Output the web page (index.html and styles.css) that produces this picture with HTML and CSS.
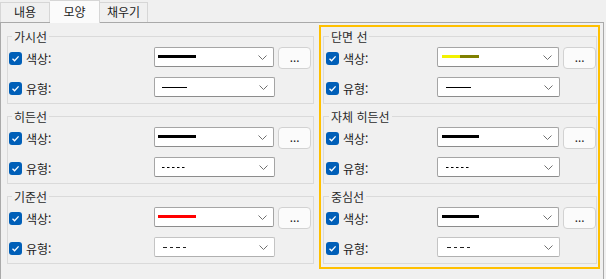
FILE: index.html
```html
<!DOCTYPE html>
<html lang="ko">
<head>
  <meta charset="UTF-8">
  <title>선 모양</title>
  <link rel="stylesheet" href="styles.css">
</head>
<body>
  <div class="tabs">
    <div class="tab first">내용</div>
    <div class="tab active">모양</div>
    <div class="tab">채우기</div>
  </div>

  <div class="panel">
    <div class="col-left">
      <fieldset class="group">
        <legend>가시선</legend>
        <div class="row">
          <label class="check"><span class="box"><svg width="13" height="13" viewBox="0 0 13 13"><polyline points="3.5,6.8 5.6,8.8 9.6,4.4" /></svg></span>색상:</label>
          <div class="combo"><svg class="swatch" width="40" height="6"><rect x="0" y="1" width="38" height="3" fill="#000" /></svg><svg class="chev" width="9" height="5"><polyline points="0.5,0.5 4.5,4.5 8.5,0.5" /></svg></div>
          <button class="more">...</button>
        </div>
        <div class="row">
          <label class="check"><span class="box"><svg width="13" height="13" viewBox="0 0 13 13"><polyline points="3.5,6.8 5.6,8.8 9.6,4.4" /></svg></span>유형:</label>
          <div class="combo"><svg class="swatch" width="40" height="6"><line x1="4" y1="3.5" x2="29" y2="3.5" stroke="#000" /></svg><svg class="chev" width="9" height="5"><polyline points="0.5,0.5 4.5,4.5 8.5,0.5" /></svg></div>
        </div>
      </fieldset>

      <fieldset class="group">
        <legend>히든선</legend>
        <div class="row">
          <label class="check"><span class="box"><svg width="13" height="13" viewBox="0 0 13 13"><polyline points="3.5,6.8 5.6,8.8 9.6,4.4" /></svg></span>색상:</label>
          <div class="combo"><svg class="swatch" width="40" height="6"><rect x="0" y="1" width="38" height="3" fill="#000" /></svg><svg class="chev" width="9" height="5"><polyline points="0.5,0.5 4.5,4.5 8.5,0.5" /></svg></div>
          <button class="more">...</button>
        </div>
        <div class="row">
          <label class="check"><span class="box"><svg width="13" height="13" viewBox="0 0 13 13"><polyline points="3.5,6.8 5.6,8.8 9.6,4.4" /></svg></span>유형:</label>
          <div class="combo"><svg class="swatch" width="40" height="6"><line x1="4" y1="3.5" x2="27" y2="3.5" stroke="#000" stroke-dasharray="2.5 2.5" /></svg><svg class="chev" width="9" height="5"><polyline points="0.5,0.5 4.5,4.5 8.5,0.5" /></svg></div>
        </div>
      </fieldset>

      <fieldset class="group">
        <legend>기준선</legend>
        <div class="row">
          <label class="check"><span class="box"><svg width="13" height="13" viewBox="0 0 13 13"><polyline points="3.5,6.8 5.6,8.8 9.6,4.4" /></svg></span>색상:</label>
          <div class="combo"><svg class="swatch" width="40" height="6"><rect x="0" y="1" width="38" height="3" fill="#f00" /></svg><svg class="chev" width="9" height="5"><polyline points="0.5,0.5 4.5,4.5 8.5,0.5" /></svg></div>
          <button class="more">...</button>
        </div>
        <div class="row">
          <label class="check"><span class="box"><svg width="13" height="13" viewBox="0 0 13 13"><polyline points="3.5,6.8 5.6,8.8 9.6,4.4" /></svg></span>유형:</label>
          <div class="combo dim"><svg class="swatch" width="40" height="6"><line x1="5" y1="3.5" x2="29" y2="3.5" stroke="#222" stroke-dasharray="4 3 3 3" /></svg><svg class="chev" width="9" height="5"><polyline points="0.5,0.5 4.5,4.5 8.5,0.5" /></svg></div>
        </div>
      </fieldset>
    </div>

    <div class="col-right">
      <fieldset class="group">
        <legend>단면 선</legend>
        <div class="row">
          <label class="check"><span class="box"><svg width="13" height="13" viewBox="0 0 13 13"><polyline points="3.5,6.8 5.6,8.8 9.6,4.4" /></svg></span>색상:</label>
          <div class="combo"><svg class="swatch" width="40" height="6"><rect x="1" y="1" width="18" height="3" fill="#f2f200" /><rect x="19" y="1" width="19" height="3" fill="#808000" /></svg><svg class="chev" width="9" height="5"><polyline points="0.5,0.5 4.5,4.5 8.5,0.5" /></svg></div>
          <button class="more">...</button>
        </div>
        <div class="row">
          <label class="check"><span class="box"><svg width="13" height="13" viewBox="0 0 13 13"><polyline points="3.5,6.8 5.6,8.8 9.6,4.4" /></svg></span>유형:</label>
          <div class="combo"><svg class="swatch" width="40" height="6"><line x1="5" y1="3.5" x2="30" y2="3.5" stroke="#000" /></svg><svg class="chev" width="9" height="5"><polyline points="0.5,0.5 4.5,4.5 8.5,0.5" /></svg></div>
        </div>
      </fieldset>

      <fieldset class="group">
        <legend>자체 히든선</legend>
        <div class="row">
          <label class="check"><span class="box"><svg width="13" height="13" viewBox="0 0 13 13"><polyline points="3.5,6.8 5.6,8.8 9.6,4.4" /></svg></span>색상:</label>
          <div class="combo"><svg class="swatch" width="40" height="6"><rect x="1" y="1" width="37" height="3" fill="#000" /></svg><svg class="chev" width="9" height="5"><polyline points="0.5,0.5 4.5,4.5 8.5,0.5" /></svg></div>
          <button class="more">...</button>
        </div>
        <div class="row">
          <label class="check"><span class="box"><svg width="13" height="13" viewBox="0 0 13 13"><polyline points="3.5,6.8 5.6,8.8 9.6,4.4" /></svg></span>유형:</label>
          <div class="combo"><svg class="swatch" width="40" height="6"><line x1="5" y1="3.5" x2="28" y2="3.5" stroke="#000" stroke-dasharray="2.5 2.5" /></svg><svg class="chev" width="9" height="5"><polyline points="0.5,0.5 4.5,4.5 8.5,0.5" /></svg></div>
        </div>
      </fieldset>

      <fieldset class="group">
        <legend>중심선</legend>
        <div class="row">
          <label class="check"><span class="box"><svg width="13" height="13" viewBox="0 0 13 13"><polyline points="3.5,6.8 5.6,8.8 9.6,4.4" /></svg></span>색상:</label>
          <div class="combo"><svg class="swatch" width="40" height="6"><rect x="1" y="1" width="37" height="3" fill="#000" /></svg><svg class="chev" width="9" height="5"><polyline points="0.5,0.5 4.5,4.5 8.5,0.5" /></svg></div>
          <button class="more">...</button>
        </div>
        <div class="row">
          <label class="check"><span class="box"><svg width="13" height="13" viewBox="0 0 13 13"><polyline points="3.5,6.8 5.6,8.8 9.6,4.4" /></svg></span>유형:</label>
          <div class="combo dim"><svg class="swatch" width="40" height="6"><line x1="6" y1="3.5" x2="30" y2="3.5" stroke="#222" stroke-dasharray="4 3 3 3" /></svg><svg class="chev" width="9" height="5"><polyline points="0.5,0.5 4.5,4.5 8.5,0.5" /></svg></div>
        </div>
      </fieldset>
    </div>
  </div>
</body>
</html>
```

FILE: styles.css
```css
body { margin: 0; background: #f0f0f0; font-family: "Noto Sans CJK KR", "Noto Sans", sans-serif; font-size: 12px; color: #1b1b1b; width: 606px; height: 279px; overflow: hidden; }

.tabs { display: flex; align-items: flex-end; height: 22px; }
.tab { box-sizing: border-box; height: 20px; line-height: 18px; width: 50px; text-align: center; border: 1px solid #d6d6d6; border-left: none; border-bottom: none; background: #f0f0f0; }
.tab.first { border-left: 1px solid #d6d6d6; }
.tab.active { height: 23px; line-height: 22px; margin-bottom: -1px; background: #fbfbfb; position: relative; z-index: 1; }
.tab:last-child { width: 48px; }

.panel { box-sizing: border-box; width: 604px; height: 260px; border: 1px solid #a9a9a9; border-bottom: none; padding: 2px 0 0 6px; display: flex; align-items: flex-start; gap: 5px; }

.col-left { display: flex; flex-direction: column; gap: 5px; margin-top: 4px; width: 307px; }
.col-right { display: flex; flex-direction: column; gap: 5px; border: 2px solid #ffc000; padding: 2px 1px 3px 2px; }

.group { box-sizing: border-box; margin: 0; min-width: 0; border: 1px solid #dadada; padding: 3px 2px 6px 1px; display: flex; flex-direction: column; gap: 8px; }
.group legend { font-size: 12px; line-height: 15px; padding: 0 2px; margin-left: 3px; color: #2a2a2a; }
.col-right .group { width: 274px; padding-right: 0; }
.col-right .group legend { margin-left: 4px; }

.row { display: flex; align-items: flex-start; }
.check { display: flex; align-items: center; gap: 4px; width: 145px; height: 20px; padding-top: 2px; box-sizing: border-box; }
.col-right .check { width: 112px; padding-left: 1px; }
.box { display: block; width: 13px; height: 13px; border-radius: 3px; background: #005fb8; }
.box svg { display: block; fill: none; stroke: #fff; stroke-width: 1.3; }

.combo { box-sizing: border-box; width: 121px; height: 20px; border: 1px solid #a5a5a5; border-bottom-color: #8c8c8c; border-radius: 2px; background: #fff; display: flex; align-items: center; justify-content: space-between; padding: 0 6px 0 3px; }
.col-right .combo { width: 123px; }
.combo.dim { border-color: #c4c4c4; border-bottom-color: #b0b0b0; }
.swatch { display: block; }
.chev { display: block; fill: none; stroke: #707070; stroke-width: 1; }

.more { box-sizing: border-box; width: 33px; height: 22px; margin-left: 4px; padding: 0; border: 1px solid #d2d2d2; border-radius: 4px; background: #fbfbfb; font-family: "Noto Sans", sans-serif; font-size: 12px; line-height: 20px; color: #1b1b1b; }
```
